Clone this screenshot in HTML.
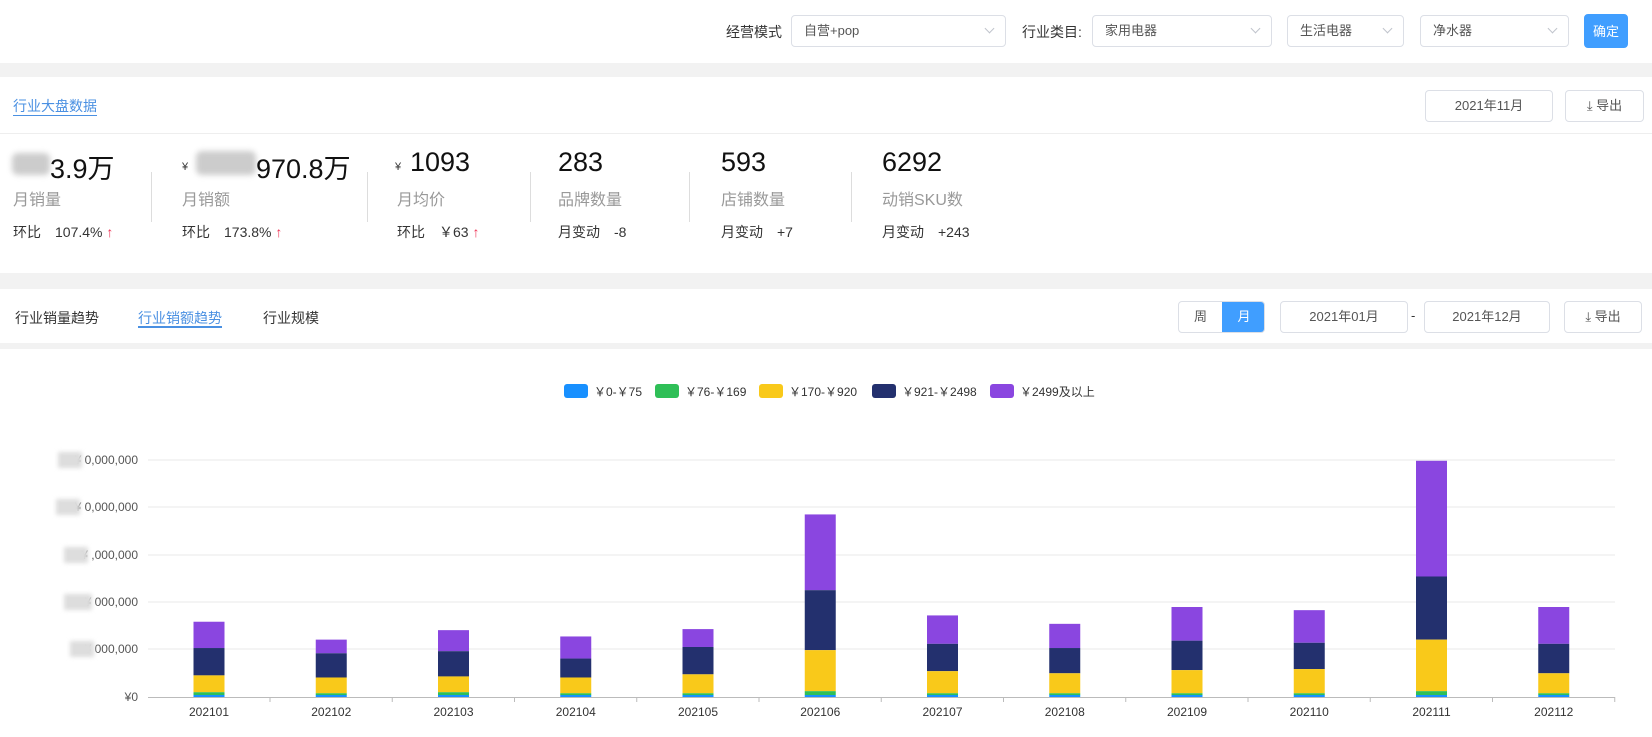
<!DOCTYPE html>
<html><head><meta charset="utf-8"><style>
*{margin:0;padding:0;box-sizing:border-box}
body{width:1652px;height:737px;background:#f2f2f2;font-family:"Liberation Sans","Noto Sans CJK SC",sans-serif;position:relative;overflow:hidden;color:#333}
.a{position:absolute}
.card{position:absolute;left:0;width:1652px;background:#fff}
.sel{position:absolute;height:32px;border:1px solid #dcdfe6;border-radius:4px;background:#fff;font-size:13px;color:#555;line-height:30px;padding-left:12px}
.sel i{position:absolute;right:12px;top:9px;width:7px;height:7px;border-right:1px solid #c0c4cc;border-bottom:1px solid #c0c4cc;transform:rotate(45deg)}
.btn{position:absolute;height:32px;border:1px solid #dcdfe6;border-radius:4px;background:#fff;font-size:13px;color:#555;line-height:30px;text-align:center}
.big{position:absolute;top:147px;font-size:27px;color:#111}
.lbl{position:absolute;top:186px;font-size:16px;color:#999}
.r3{position:absolute;top:222px;font-size:14px;color:#333}
.r3 b{font-weight:normal;margin-left:14px}
.up{color:#e35}
.dv{position:absolute;top:172px;width:1px;height:50px;background:#ddd}
.blur{position:absolute;background:#ccc;filter:blur(3px);border-radius:6px}
</style></head><body>
<div class="card" style="top:0;height:63px"></div>
<div class="a" style="left:726px;top:22px;font-size:14px;color:#333">经营模式</div>
<div class="sel" style="left:791px;top:15px;width:215px">自营+pop<i></i></div>
<div class="a" style="left:1022px;top:22px;font-size:14px;color:#333">行业类目:</div>
<div class="sel" style="left:1092px;top:15px;width:180px">家用电器<i></i></div>
<div class="sel" style="left:1287px;top:15px;width:117px">生活电器<i></i></div>
<div class="sel" style="left:1420px;top:15px;width:149px">净水器<i></i></div>
<div class="btn" style="left:1584px;top:14px;width:44px;height:34px;background:#409eff;border-color:#409eff;color:#fff;line-height:34px">确定</div>

<div class="card" style="top:77px;height:196px"></div>
<div class="a" style="left:13px;top:96px;font-size:14px;color:#4a90e2">行业大盘数据</div>
<div class="a" style="left:13px;top:115px;width:84px;height:1px;background:#4a90e2"></div>
<div class="btn" style="left:1425px;top:90px;width:128px">2021年11月</div>
<div class="btn" style="left:1565px;top:90px;width:79px">⤓ 导出</div>
<div class="a" style="left:0;top:133px;width:1652px;height:1px;background:#eee"></div>

<div class="blur" style="left:12px;top:153px;width:38px;height:22px"></div>
<div class="big" style="left:50px">3.9万</div>
<div class="lbl" style="left:13px">月销量</div>
<div class="r3" style="left:13px">环比<b>107.4%</b> <span class="up">↑</span></div>
<div class="dv" style="left:151px"></div>
<div class="a" style="left:182px;top:161px;font-size:11px">¥</div>
<div class="blur" style="left:196px;top:151px;width:60px;height:24px"></div>
<div class="big" style="left:256px">970.8万</div>
<div class="lbl" style="left:182px">月销额</div>
<div class="r3" style="left:182px">环比<b>173.8%</b> <span class="up">↑</span></div>
<div class="dv" style="left:367px"></div>
<div class="a" style="left:395px;top:161px;font-size:11px">¥</div>
<div class="big" style="left:410px">1093</div>
<div class="lbl" style="left:397px">月均价</div>
<div class="r3" style="left:397px">环比<b>￥63</b> <span class="up">↑</span></div>
<div class="dv" style="left:530px"></div>
<div class="big" style="left:558px">283</div>
<div class="lbl" style="left:558px">品牌数量</div>
<div class="r3" style="left:558px">月变动<b>-8</b></div>
<div class="dv" style="left:689px"></div>
<div class="big" style="left:721px">593</div>
<div class="lbl" style="left:721px">店铺数量</div>
<div class="r3" style="left:721px">月变动<b>+7</b></div>
<div class="dv" style="left:851px"></div>
<div class="big" style="left:882px">6292</div>
<div class="lbl" style="left:882px">动销SKU数</div>
<div class="r3" style="left:882px">月变动<b>+243</b></div>

<div class="card" style="top:289px;height:54px"></div>
<div class="a" style="left:15px;top:308px;font-size:14px;color:#333">行业销量趋势</div>
<div class="a" style="left:138px;top:308px;font-size:14px;color:#4a90e2">行业销额趋势</div>
<div class="a" style="left:138px;top:326px;width:84px;height:2px;background:#4a90e2"></div>
<div class="a" style="left:263px;top:308px;font-size:14px;color:#333">行业规模</div>
<div class="btn" style="left:1178px;top:301px;width:87px;overflow:hidden;text-align:left"><span style="display:inline-block;width:43px;text-align:center">周</span><span style="position:absolute;left:43px;top:-1px;width:44px;height:32px;background:#409eff;color:#fff;text-align:center;line-height:32px">月</span></div>
<div class="btn" style="left:1280px;top:301px;width:128px">2021年01月</div>
<div class="a" style="left:1411px;top:308px;font-size:13px">-</div>
<div class="btn" style="left:1424px;top:301px;width:126px">2021年12月</div>
<div class="btn" style="left:1564px;top:301px;width:78px">⤓ 导出</div>

<div class="card" style="top:349px;height:388px"></div>
<svg class="a" style="left:0;top:0" width="1652" height="737" font-family="Liberation Sans, Noto Sans CJK SC, sans-serif">
<g font-size="12" fill="#333">
<rect x="564" y="384" width="24" height="14" rx="3" fill="#1890ff"/><text x="594" y="396">￥0-￥75</text>
<rect x="655" y="384" width="24" height="14" rx="3" fill="#2fbf57"/><text x="685" y="396">￥76-￥169</text>
<rect x="759" y="384" width="24" height="14" rx="3" fill="#f9c91a"/><text x="789" y="396">￥170-￥920</text>
<rect x="872" y="384" width="24" height="14" rx="3" fill="#23306e"/><text x="902" y="396">￥921-￥2498</text>
<rect x="990" y="384" width="24" height="14" rx="3" fill="#8a46e0"/><text x="1020" y="396">￥2499及以上</text>
</g>
<g stroke="#eaeaea"><line x1="148" x2="1615" y1="460" y2="460"/><line x1="148" x2="1615" y1="507" y2="507"/><line x1="148" x2="1615" y1="555" y2="555"/><line x1="148" x2="1615" y1="602" y2="602"/><line x1="148" x2="1615" y1="649" y2="649"/></g>
<line x1="148" x2="1615" y1="697.5" y2="697.5" stroke="#bbb"/>
<g font-size="12" fill="#555" text-anchor="end">
<text x="138" y="464">¥ 0,000,000</text><text x="138" y="511">¥ 0,000,000</text><text x="138" y="559">¥ ,000,000</text><text x="138" y="606">¥ 000,000</text><text x="138" y="653">¥ 000,000</text><text x="138" y="701">¥0</text>
</g>
<g fill="#ddd" filter="blur(2px)"><rect x="58" y="452" width="24" height="16"/><rect x="56" y="499" width="24" height="16"/><rect x="64" y="547" width="24" height="16"/><rect x="64" y="594" width="28" height="16"/><rect x="70" y="641" width="24" height="16"/></g>
<g id="bars"></g>
<g font-size="12" fill="#333" text-anchor="middle" id="xl"></g>
</svg>
<script>
var d=[[591,616,642,658],[608,621,644,659],[599,619,643,658],[605,626,644,659],[598,615,641,659],[489,561,618,657],[585,612,638,659],[593,616,640,659],[577,609,637,659],[580,611,636,659],[438,548,608,657],[577,612,640,659]];
var k=1.052,base=697,s='',t='',c=['#8a46e0','#23306e','#f9c91a','#2fbf57'];
d.forEach(function(r,i){var cx=209+122.25*i,x=cx-15.5;
var y=r.map(function(v){return v*k});y.push(base-2);
for(var j=0;j<4;j++){s+='<rect x="'+x+'" y="'+y[j]+'" width="31" height="'+(y[j+1]-y[j])+'" fill="'+c[j]+'"/>';}
s+='<rect x="'+x+'" y="'+(base-2)+'" width="31" height="2" fill="#1890ff"/>';
s+='<line x1="'+(cx+61)+'" x2="'+(cx+61)+'" y1="697" y2="702" stroke="#bbb"/>';
t+='<text x="'+cx+'" y="716">'+(202101+i)+'</text>';});
document.getElementById('bars').innerHTML=s;document.getElementById('xl').innerHTML=t;
</script>
</body></html>
